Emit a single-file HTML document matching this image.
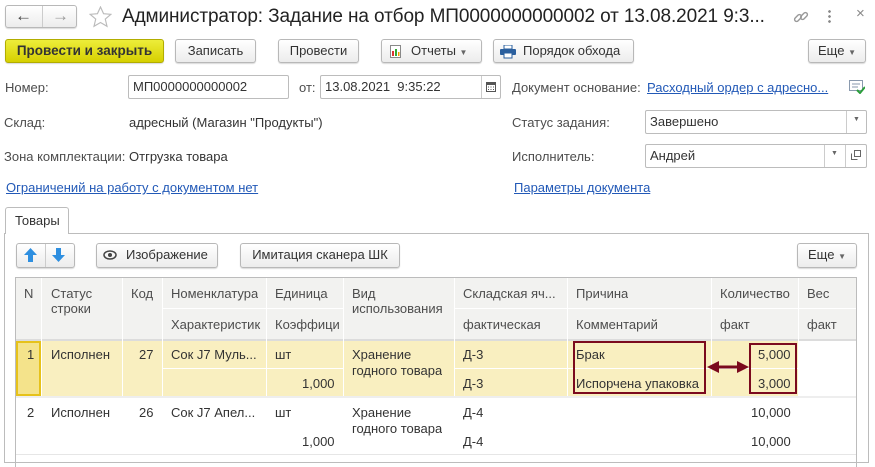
<!DOCTYPE html>
<html><head><meta charset="utf-8"><style>
*{box-sizing:border-box;margin:0;padding:0}
body{width:875px;height:458px;overflow:hidden;background:#fff;font-family:"Liberation Sans",Arial,sans-serif;font-size:13px;color:#333;position:relative}
.a{position:absolute;white-space:nowrap}
.btn{position:absolute;border:1px solid #b8b8b8;border-radius:3px;background:linear-gradient(#fff,#ececec);box-shadow:0 1px 1px rgba(0,0,0,.15);text-align:center;color:#333;line-height:22px;height:24px}
.inp{position:absolute;border:1px solid #bcbcbc;border-radius:2px;background:#fff;height:24px;line-height:22px;padding-left:4px;color:#333}
.lnk{color:#2259b7;text-decoration:underline}
.lbl{color:#4d4d4d}
.c{position:absolute;white-space:nowrap;overflow:hidden}
.hd{background:#f2f2f0;color:#4d4d4d}
.v{position:absolute;width:1px;background:#dcdcdc}
.h{position:absolute;height:1px;background:#dcdcdc}
</style></head><body>
<!-- nav -->
<div class="btn" style="left:5px;top:5px;width:72px;height:23px"></div>
<div class="a" style="left:42px;top:6px;width:1px;height:21px;background:#ccc"></div>
<div class="a" style="left:15px;top:5px;font-size:17px;color:#444;line-height:22px">&#8592;</div>
<div class="a" style="left:52px;top:5px;font-size:17px;color:#999;line-height:22px">&#8594;</div>
<svg class="a" style="left:89px;top:6px" width="23" height="22" viewBox="0 0 24 23"><path d="M12 1l3.2 7 7.6.7-5.8 5 1.8 7.5L12 17.3 5.2 21.2 7 13.7 1.2 8.7l7.6-.7z" fill="none" stroke="#bbb" stroke-width="1.2"/></svg>
<div class="a" style="left:122px;top:4px;font-size:19px;color:#222;line-height:26px;letter-spacing:-0.1px">Администратор: Задание на отбор МП0000000000002 от 13.08.2021 9:3...</div>
<svg class="a" style="left:792px;top:8px" width="18" height="18" viewBox="0 0 18 18"><g fill="none" stroke="#999" stroke-width="1.4"><rect x="2" y="8" width="8" height="4" rx="2" transform="rotate(-45 6 10)"/><rect x="8" y="6" width="8" height="4" rx="2" transform="rotate(-45 12 8)"/></g></svg>
<div class="a" style="left:828px;top:9px;width:3px;height:15px;background:radial-gradient(circle,#888 1.2px,transparent 1.5px) 0 0/3px 5px"></div>
<div class="a" style="left:856px;top:5px;font-size:15px;color:#888">×</div>
<!-- toolbar -->
<div class="btn" style="left:5px;top:39px;width:159px;background:linear-gradient(#eded3a,#d6d000);border-color:#b2ad00;color:#333;font-weight:bold;font-size:13.5px">Провести и закрыть</div>
<div class="btn" style="left:175px;top:39px;width:81px">Записать</div>
<div class="btn" style="left:278px;top:39px;width:81px">Провести</div>
<div class="btn" style="left:381px;top:39px;width:101px;text-align:left;padding-left:29px">Отчеты <span style="font-size:8px;color:#666">▼</span></div>
<svg class="a" style="left:390px;top:45px" width="11" height="13"><rect x=".5" y=".5" width="10" height="12" fill="#fff" stroke="#888"/><rect x="2" y="6" width="2" height="5" fill="#d33"/><rect x="5" y="4" width="2" height="7" fill="#3a3"/><rect x="8" y="7" width="1.5" height="4" fill="#e90"/></svg>
<div class="btn" style="left:493px;top:39px;width:141px;text-align:left;padding-left:29px">Порядок обхода</div>
<svg class="a" style="left:500px;top:45px" width="16" height="14"><rect x="4" y="0" width="8" height="4" fill="#fff" stroke="#2a5f9e"/><rect x="0" y="4" width="16" height="6" rx="1" fill="#2a5f9e"/><rect x="4" y="8" width="8" height="5" fill="#fff" stroke="#2a5f9e"/></svg>
<div class="btn" style="left:808px;top:39px;width:58px">Еще <span style="font-size:8px;color:#666">▼</span></div>
<!-- fields -->
<div class="a lbl" style="left:5px;top:80px">Номер:</div>
<div class="inp" style="left:128px;top:75px;width:161px">МП0000000000002</div>
<div class="a lbl" style="left:299px;top:80px">от:</div>
<div class="inp" style="left:320px;top:75px;width:181px">13.08.2021&nbsp; 9:35:22</div>
<div class="a" style="left:481px;top:76px;width:1px;height:22px;background:#ccc"></div>
<svg class="a" style="left:486px;top:82px" width="10" height="10"><rect x=".5" y=".5" width="9" height="9" fill="none" stroke="#555"/><rect x="0" y="0" width="10" height="3" fill="#555"/><path d="M2 5h1M4.5 5h1M7 5h1M2 7.5h1M4.5 7.5h1M7 7.5h1" stroke="#555"/></svg>
<div class="a lbl" style="left:512px;top:80px">Документ основание:</div>
<div class="a lnk" style="left:647px;top:80px">Расходный ордер с адресно...</div>
<svg class="a" style="left:849px;top:80px" width="16" height="14"><rect x=".5" y=".5" width="13" height="10" fill="#fff" stroke="#8a9aae"/><path d="M3 4h8M3 7h6" stroke="#8a9aae"/><path d="M8 10l3 3 5-6" fill="none" stroke="#2a9d3a" stroke-width="2"/></svg>

<div class="a lbl" style="left:4px;top:115px">Склад:</div>
<div class="a" style="left:129px;top:115px">адресный (Магазин "Продукты")</div>
<div class="a lbl" style="left:512px;top:115px">Статус задания:</div>
<div class="inp" style="left:645px;top:110px;width:222px">Завершено</div>
<div class="a" style="left:846px;top:111px;width:1px;height:22px;background:#ccc"></div>
<div class="a" style="left:853px;top:116px;font-size:7px;color:#666">▼</div>

<div class="a lbl" style="left:4px;top:149px">Зона комплектации: <span style="color:#333">Отгрузка товара</span></div>
<div class="a lbl" style="left:512px;top:149px">Исполнитель:</div>
<div class="inp" style="left:645px;top:144px;width:222px">Андрей</div>
<div class="a" style="left:824px;top:145px;width:1px;height:22px;background:#ccc"></div>
<div class="a" style="left:831px;top:150px;font-size:7px;color:#666">▼</div>
<div class="a" style="left:845px;top:145px;width:1px;height:22px;background:#ccc"></div>
<svg class="a" style="left:851px;top:150px" width="10" height="10"><rect x="3.5" y=".5" width="6" height="6" fill="none" stroke="#666"/><path d="M.5 3.5v6h6" fill="none" stroke="#666"/></svg>

<div class="a lnk" style="left:6px;top:180px">Ограничений на работу с документом нет</div>
<div class="a lnk" style="left:514px;top:180px">Параметры документа</div>
<!-- tab -->
<div class="a" style="left:4px;top:233px;width:865px;height:230px;border:1px solid #bcbcbc"></div>
<div class="a" style="left:5px;top:207px;width:64px;height:27px;border:1px solid #bcbcbc;border-bottom:none;border-radius:3px 3px 0 0;background:#fff;padding:5px 0 0 9px">Товары</div>
<!-- table toolbar -->
<div class="btn" style="left:16px;top:243px;width:59px;height:25px"></div>
<div class="a" style="left:45px;top:244px;width:1px;height:23px;background:#ccc"></div>
<svg class="a" style="left:24px;top:248px" width="13" height="14"><path d="M6.5 0L13 7H9v7H4V7H0z" fill="#2e8fe0"/></svg>
<svg class="a" style="left:52px;top:248px" width="13" height="14"><path d="M6.5 14L13 7H9V0H4v7H0z" fill="#2e8fe0"/></svg>
<div class="btn" style="left:96px;top:243px;width:122px;height:25px;text-align:left;padding-left:29px">Изображение</div>
<svg class="a" style="left:103px;top:250px" width="14" height="10"><ellipse cx="7" cy="5" rx="6" ry="4" fill="none" stroke="#444" stroke-width="1.5"/><circle cx="7" cy="5" r="2" fill="#444"/></svg>
<div class="btn" style="left:240px;top:243px;width:160px;height:25px">Имитация сканера ШК</div>
<div class="btn" style="left:797px;top:243px;width:60px;height:25px">Еще <span style="font-size:8px;color:#666">▼</span></div>
<!-- table -->
<div class="a" style="left:15px;top:277px;width:842px;height:190px;border:1px solid #bcbcbc;border-bottom:none"></div>
<div class="a hd" style="left:16px;top:278px;width:840px;height:62px"></div>
<div class="a" style="left:16px;top:341px;width:782px;height:56px;background:#f9efc0"></div>
<div class="a" style="left:16px;top:341px;width:25px;height:55px;background:#f4e38b;border:2px solid #e6c21a"></div>
<div class="h" style="left:162px;top:308px;width:181px;background:#fff"></div>
<div class="h" style="left:454px;top:308px;width:402px;background:#fff"></div>
<div class="h" style="left:16px;top:339px;width:840px;height:2px;background:#dcdcdc"></div>
<div class="h" style="left:162px;top:368px;width:181px;background:#fff"></div>
<div class="h" style="left:454px;top:368px;width:402px;background:#fff"></div>
<div class="h" style="left:16px;top:396px;width:840px;height:2px;background:#eee"></div>
<div class="h" style="left:16px;top:454px;width:840px;background:#e6e6e6"></div>
<div class="v" style="left:41px;top:278px;height:118px;background:#fff"></div>
<div class="v" style="left:122px;top:278px;height:118px;background:#fff"></div>
<div class="v" style="left:162px;top:278px;height:118px;background:#fff"></div>
<div class="v" style="left:266px;top:278px;height:118px;background:#fff"></div>
<div class="v" style="left:343px;top:278px;height:118px;background:#fff"></div>
<div class="v" style="left:454px;top:278px;height:118px;background:#fff"></div>
<div class="v" style="left:567px;top:278px;height:118px;background:#fff"></div>
<div class="v" style="left:711px;top:278px;height:118px;background:#fff"></div>
<div class="v" style="left:798px;top:278px;height:118px;background:#fff"></div>
<div class="c hd" style="left:24px;top:286px;color:#4d4d4d">N</div>
<div class="c" style="left:51px;top:286px;color:#4d4d4d;line-height:15px">Статус<br>строки</div>
<div class="c" style="left:131px;top:286px;color:#4d4d4d">Код</div>
<div class="c" style="left:171px;top:286px;color:#4d4d4d">Номенклатура</div>
<div class="c" style="left:171px;top:317px;color:#4d4d4d;width:92px">Характеристик</div>
<div class="c" style="left:275px;top:286px;color:#4d4d4d">Единица</div>
<div class="c" style="left:275px;top:317px;color:#4d4d4d;width:66px">Коэффици</div>
<div class="c" style="left:352px;top:286px;color:#4d4d4d;line-height:15px">Вид<br>использования</div>
<div class="c" style="left:463px;top:286px;color:#4d4d4d">Складская яч...</div>
<div class="c" style="left:463px;top:317px;color:#4d4d4d">фактическая</div>
<div class="c" style="left:576px;top:286px;color:#4d4d4d">Причина</div>
<div class="c" style="left:576px;top:317px;color:#4d4d4d">Комментарий</div>
<div class="c" style="left:720px;top:286px;color:#4d4d4d">Количество</div>
<div class="c" style="left:720px;top:317px;color:#4d4d4d">факт</div>
<div class="c" style="left:807px;top:286px;color:#4d4d4d">Вес</div>
<div class="c" style="left:807px;top:317px;color:#4d4d4d">факт</div>
<!-- row1 -->
<div class="c" style="left:27px;top:347px">1</div>
<div class="c" style="left:51px;top:347px">Исполнен</div>
<div class="c" style="left:139px;top:347px">27</div>
<div class="c" style="left:171px;top:347px">Сок J7 Муль...</div>
<div class="c" style="left:275px;top:347px">шт</div>
<div class="c" style="left:302px;top:376px">1,000</div>
<div class="c" style="left:352px;top:347px;line-height:16px">Хранение<br>годного товара</div>
<div class="c" style="left:463px;top:347px">Д-3</div>
<div class="c" style="left:463px;top:376px">Д-3</div>
<div class="c" style="left:576px;top:347px">Брак</div>
<div class="c" style="left:576px;top:376px">Испорчена упаковка</div>
<div class="c" style="left:758px;top:347px">5,000</div>
<div class="c" style="left:758px;top:376px">3,000</div>
<div class="a" style="left:573px;top:341px;width:133px;height:53px;border:2px solid #7b0a1e"></div>
<div class="a" style="left:749px;top:343px;width:48px;height:51px;border:2px solid #7b0a1e"></div>
<svg class="a" style="left:705px;top:360px" width="46" height="14"><path d="M2 7L14 1V5.5H32V1L44 7L32 13V8.5H14V13Z" fill="#7b0a1e"/></svg>
<!-- row2 -->
<div class="c" style="left:27px;top:405px">2</div>
<div class="c" style="left:51px;top:405px">Исполнен</div>
<div class="c" style="left:139px;top:405px">26</div>
<div class="c" style="left:171px;top:405px">Сок J7 Апел...</div>
<div class="c" style="left:275px;top:405px">шт</div>
<div class="c" style="left:302px;top:434px">1,000</div>
<div class="c" style="left:352px;top:405px;line-height:16px">Хранение<br>годного товара</div>
<div class="c" style="left:463px;top:405px">Д-4</div>
<div class="c" style="left:463px;top:434px">Д-4</div>
<div class="c" style="left:751px;top:405px">10,000</div>
<div class="c" style="left:751px;top:434px">10,000</div>
</body></html>
